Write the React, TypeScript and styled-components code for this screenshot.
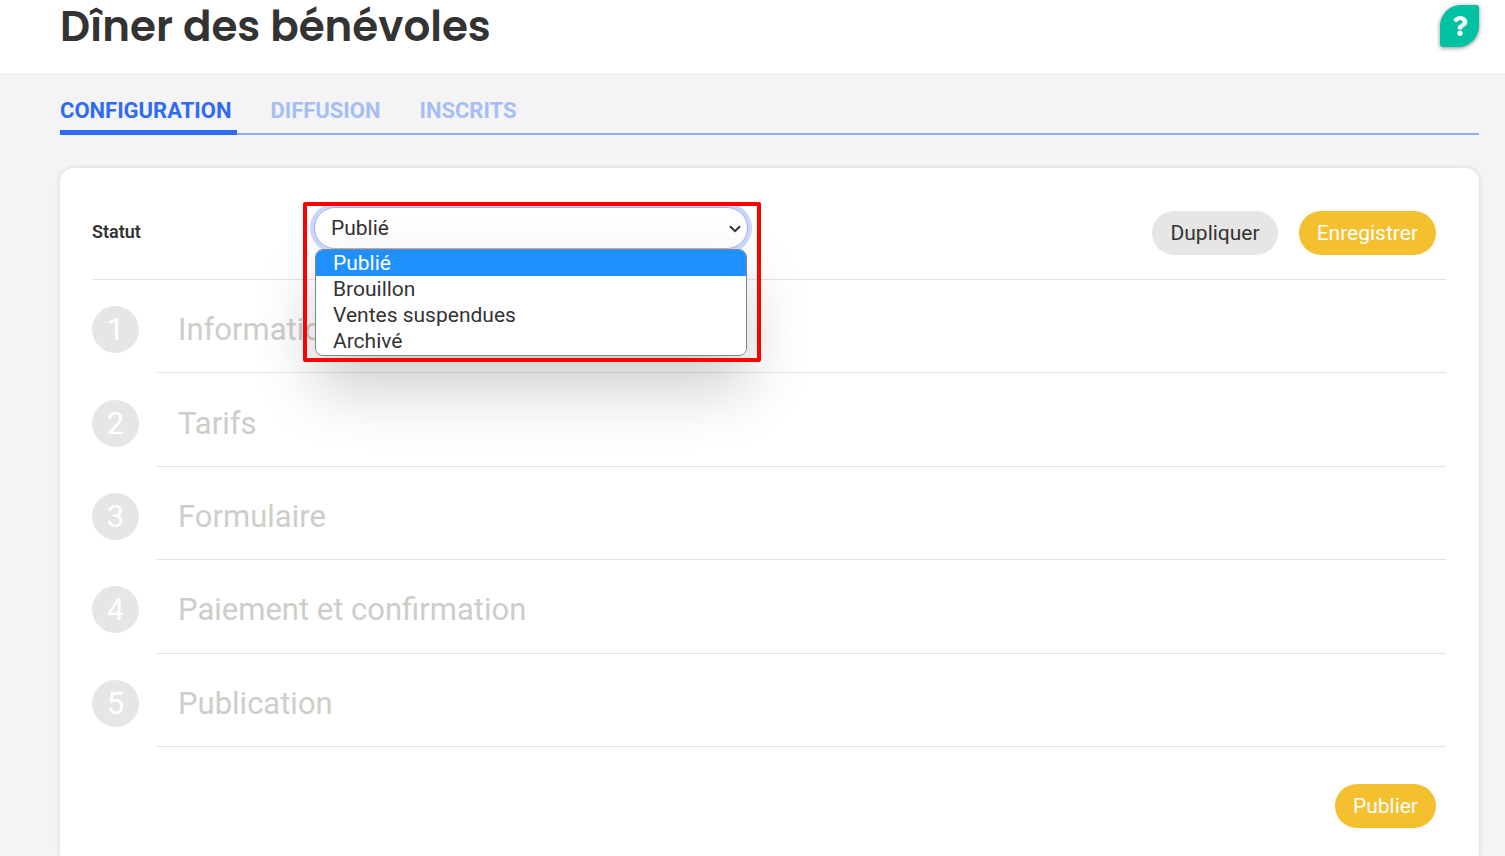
import React from 'react';
import styled, { createGlobalStyle } from 'styled-components';
import { FaQuestion } from 'react-icons/fa';

const GlobalStyle = createGlobalStyle`
  *, *::before, *::after { box-sizing: border-box; }
  html, body { margin: 0; }
  body {
    background: #f4f4f4;
    color: #333;
    font-family: Roboto, "Liberation Sans", sans-serif;
    font-size: 21px;
    line-height: 26px;
  }
`;

const Page = styled.div`
  display: flex;
  flex-direction: column;
  min-height: 100vh;
`;

const Header = styled.header`
  display: flex;
  align-items: flex-start;
  justify-content: space-between;
  padding: 0 26px 19px 60px;
  background: #fff;
`;

const Title = styled.h1`
  margin: 0;
  font-family: Poppins, Inter, sans-serif;
  font-size: 42px;
  font-weight: 600;
  line-height: 54px;
`;

const HelpButton = styled.button`
  display: flex;
  align-items: center;
  justify-content: center;
  width: 39px;
  height: 42px;
  margin: 5px 0 0;
  padding: 0;
  border: 0;
  border-radius: 21px 3px 21px 3px;
  background: #00c2a2;
  color: #fff;
  box-shadow: 0 1px 4px rgba(0, 0, 0, 0.45);
`;

const Main = styled.main`
  display: flex;
  flex: 1;
  flex-direction: column;
  gap: 33px;
  padding: 22px 26px 0 60px;
`;

const Tabs = styled.nav`
  display: flex;
  gap: 33px;
  box-shadow: inset 0 -2px #8fabf3;
`;

const Tab = styled.a<{ $active?: boolean }>`
  padding: 3px 6px 6px 0;
  border-bottom: 5px solid ${(p) => (p.$active ? '#2f6bf5' : 'transparent')};
  color: ${(p) => (p.$active ? '#2f6bf5' : '#a7bdf5')};
  font-size: 22px;
  font-weight: 700;
  text-decoration: none;
`;

const Card = styled.section`
  flex: 1;
  padding: 39px 33px 28px 32px;
  border-radius: 14px 14px 0 0;
  background: #fff;
  box-shadow: 0 0 6px rgba(0, 0, 0, 0.12);
`;

const Toolbar = styled.div`
  display: flex;
  align-items: flex-start;
  height: 73px;
  border-bottom: 1px solid #e3e3e3;
`;

const Label = styled.label`
  width: 222px;
  padding-top: 12px;
  font-size: 18px;
  font-weight: 600;
`;

const Field = styled.div`
  position: relative;
  width: 434px;
`;

const Select = styled.select`
  display: block;
  width: 100%;
  height: 42px;
  padding: 0 16px;
  border: 1px solid #9db4f2;
  border-radius: 21px;
  outline: none;
  appearance: none;
  background: #fff;
  box-shadow: 0 0 0 4px #cbd8f9;
  color: #333;
  font: inherit;
`;

const Chevron = styled.svg`
  position: absolute;
  top: 18px;
  right: 7px;
  width: 12px;
  height: 8px;
  pointer-events: none;
`;

const Menu = styled.ul`
  position: absolute;
  top: 42px;
  left: 1px;
  right: 1px;
  z-index: 1;
  margin: 0;
  padding: 0 0 1px;
  overflow: hidden;
  border: 1px solid #858585;
  border-radius: 8px;
  background: #fff;
  box-shadow: 0 32px 64px rgba(0, 0, 0, 0.2);
  list-style: none;
`;

const Option = styled.li<{ $selected?: boolean }>`
  padding: 0 17px;
  background: ${(p) => (p.$selected ? '#1e90ff' : '#fff')};
  color: ${(p) => (p.$selected ? '#fff' : '#333')};
`;

const Highlight = styled.div`
  position: absolute;
  top: -5px;
  left: -11px;
  right: -13px;
  z-index: 2;
  height: 160px;
  border: 4px solid #f00;
  border-radius: 2px;
  pointer-events: none;
`;

const Actions = styled.div`
  display: flex;
  justify-content: flex-end;
  gap: 21px;
  margin-left: auto;
  padding: 4px 10px 0 0;
`;

const Button = styled.button<{ $primary?: boolean }>`
  height: 44px;
  padding: 0 18px;
  border: 0;
  border-radius: 22px;
  background: ${(p) => (p.$primary ? '#f5c02f' : '#e7e6e4')};
  color: ${(p) => (p.$primary ? '#fff' : '#333')};
  font: inherit;
`;

const Steps = styled.ol`
  display: grid;
  grid-auto-rows: 1fr;
  min-height: 467px;
  margin: 0 0 33px;
  padding: 0;
  list-style: none;
`;

const Step = styled.li`
  display: flex;
  align-items: stretch;
  gap: 18px;
`;

const StepNumber = styled.span`
  align-self: center;
  width: 47px;
  height: 47px;
  margin-top: 6px;
  border-radius: 50%;
  background: #e7e6e4;
  color: #fff;
  font-size: 31px;
  line-height: 47px;
  text-align: center;
`;

const StepTitle = styled.h2`
  display: flex;
  flex: 1;
  align-items: center;
  margin: 0;
  padding: 8px 21px 0;
  border-bottom: 1px solid #e3e3e3;
  color: #cfcdc9;
  font-size: 31px;
  font-weight: 400;
`;

const tabs = ['CONFIGURATION', 'DIFFUSION', 'INSCRITS'];
const statuses = ['Publié', 'Brouillon', 'Ventes suspendues', 'Archivé'];
const steps = ['Informations', 'Tarifs', 'Formulaire', 'Paiement et confirmation', 'Publication'];

export default function App() {
  return (
    <Page>
      <GlobalStyle />
      <Header>
        <Title>Dîner des bénévoles</Title>
        <HelpButton type="button" aria-label="Aide">
          <FaQuestion size={20} />
        </HelpButton>
      </Header>
      <Main>
        <Tabs>
          {tabs.map((tab, i) => (
            <Tab key={tab} href="#" $active={i === 0}>
              {tab}
            </Tab>
          ))}
        </Tabs>
        <Card>
          <Toolbar>
            <Label htmlFor="statut">Statut</Label>
            <Field>
              <Select id="statut" defaultValue="Publié">
                {statuses.map((status) => (
                  <option key={status}>{status}</option>
                ))}
              </Select>
              <Chevron viewBox="0 0 12 8" fill="none" stroke="#333" strokeWidth="2">
                <path d="M1 1.2 L6 6.2 L11 1.2" />
              </Chevron>
              <Menu role="listbox" aria-label="Statut">
                {statuses.map((status, i) => (
                  <Option key={status} role="option" aria-selected={i === 0} $selected={i === 0}>
                    {status}
                  </Option>
                ))}
              </Menu>
              <Highlight />
            </Field>
            <Actions>
              <Button type="button">Dupliquer</Button>
              <Button type="button" $primary>
                Enregistrer
              </Button>
            </Actions>
          </Toolbar>
          <Steps>
            {steps.map((step, i) => (
              <Step key={step}>
                <StepNumber>{i + 1}</StepNumber>
                <StepTitle>{step}</StepTitle>
              </Step>
            ))}
          </Steps>
          <Actions>
            <Button type="button" $primary>
              Publier
            </Button>
          </Actions>
        </Card>
      </Main>
    </Page>
  );
}
